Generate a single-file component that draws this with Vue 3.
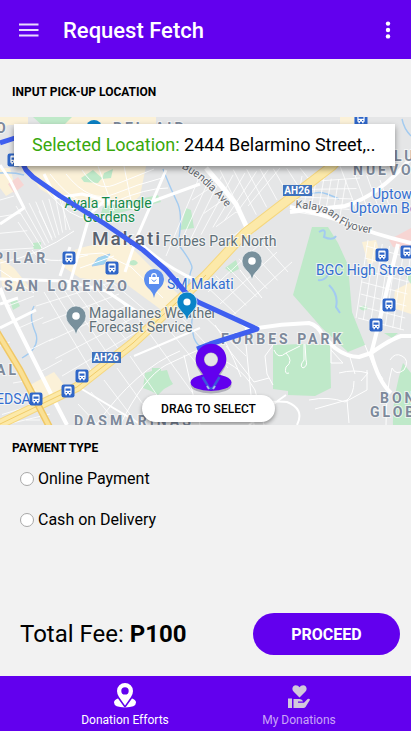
<script setup>
import { ref } from 'vue'

const payment = ref('')

// Evenly spaced side streets running between the segments a-b and c-d.
const ladder = (a, b, c, d, n) =>
  Array.from({ length: n }, (_, i) => {
    const t = n > 1 ? i / (n - 1) : 0
    const mix = (p, q) => (p + (q - p) * t).toFixed(1)
    return `M${mix(a[0], b[0])} ${mix(a[1], b[1])}L${mix(c[0], d[0])} ${mix(c[1], d[1])}`
  }).join('')

const sideStreets = [
  ladder([16, 206], [62, 196], [42, 248], [66, 230], 8),
  ladder([18, 222], [60, 200], [34, 246], [70, 230], 3),
  ladder([0, 200], [0, 250], [14, 196], [34, 248], 4),
  ladder([44, 292], [112, 282], [92, 372], [152, 316], 8),
  ladder([36, 306], [62, 376], [112, 282], [140, 330], 5),
  ladder([8, 306], [40, 372], [34, 296], [62, 360], 4),
  ladder([198, 180], [280, 168], [166, 256], [248, 206], 8),
  ladder([192, 200], [228, 240], [216, 184], [246, 226], 4),
  ladder([220, 170], [300, 168], [246, 222], [308, 178], 7),
  ladder([302, 176], [346, 180], [296, 208], [340, 216], 7),
  ladder([304, 182], [296, 212], [360, 178], [346, 220], 5),
  ladder([368, 240], [411, 252], [356, 318], [400, 330], 7),
  ladder([366, 246], [358, 318], [411, 258], [404, 330], 7),
  ladder([204, 284], [262, 242], [236, 314], [288, 272], 6),
  ladder([208, 292], [232, 316], [262, 242], [292, 262], 3),
  ladder([78, 404], [130, 356], [98, 425], [170, 414], 5),
  ladder([150, 334], [196, 308], [192, 392], [246, 356], 4),
  ladder([340, 166], [380, 180], [358, 214], [390, 208], 4),
  ladder([0, 346], [26, 420], [10, 342], [40, 420], 3),
  ladder([0, 404], [4, 425], [36, 390], [50, 414], 3),
].join('')

const stops = [
  [14, 160], [69, 258], [112, 268], [361, 119], [382, 255], [407, 252],
  [389, 305], [376, 325], [82, 376], [68, 391], [36, 399],
]

const areas = [
  { x: -4, y: 133, t: 'O' },
  { x: 113, y: 133, t: 'BEL-AIR' },
  { x: 394, y: 161, t: 'LU' },
  { x: 353, y: 175, t: 'NUEVO' },
  { x: -6, y: 263, t: 'PILAR' },
  { x: 4, y: 291, t: 'SAN LORENZO' },
  { x: -4, y: 375, t: 'AL' },
  { x: 74, y: 426, t: 'DASMARINAS' },
  { x: 221, y: 344, t: 'FORBES PARK' },
  { x: 380, y: 403, t: 'BONI' },
  { x: 370, y: 417, t: 'GLOBAL' },
]
</script>

<template>
  <div class="page">
    <header class="bar">
      <button class="icon-btn" type="button" aria-label="Menu">
        <svg width="20" height="14" viewBox="0 0 20 14"><path d="M0 1.4h19.500M0 7h19.500M0 12.6h19.500" stroke="#e9dcfd" stroke-width="2" /></svg>
      </button>
      <h1>Request Fetch</h1>
      <button class="icon-btn" type="button" aria-label="More options">
        <svg width="6" height="20" viewBox="0 0 6 20" fill="#fff"><circle cx="3" cy="3.6" r="2.2" /><circle cx="3" cy="10" r="2.2" /><circle cx="3" cy="16.4" r="2.2" /></svg>
      </button>
    </header>

    <main>
      <h2>INPUT PICK-UP LOCATION</h2>
      <section class="map" aria-label="Map">
        <svg class="tiles" viewBox="0 117 411 308" preserveAspectRatio="xMidYMid slice">
          <defs>
            <g id="stop">
              <rect x="-6.5" y="-6.5" width="13" height="13" rx="2.2" fill="#2f66c8" />
              <path d="M-3.6 -3.2q0-1.2 1.2-1.2h4.8q1.2 0 1.2 1.2v6h-1v1.4h-1.5v-1.4h-2.2v1.4h-1.5v-1.4h-1z" fill="#fff" />
              <path d="M-2.5 -2.6h5v2.4h-5zM-2.3 1h1.3v1h-1.3zM1 1h1.3v1h-1.3z" fill="#2f66c8" />
            </g>
            <path id="buendia" d="M181 168Q197 177 205 185Q216 195 232 214" />
            <path id="kalayaan" d="M295 208Q320 209 331 216Q342 230 376 234" />
          </defs>
          <rect y="117" width="411" height="308" fill="#e5e6e7" />

          <g fill="#fbf1d8">
            <path d="M0 117h28v8H8L0 130zM46 117h110v8H46zM24 166h122l-6 30-16 14-26-6-34-1-24-14zM0 168h10l6 22-10 6-6-8z" />
            <path d="M64 254l16-6 42-10 20 20 42 42-18 14-10-8-30-22-46-6-18-12z" />
            <path d="M0 258l14 10 16 20-14 4-14-6zM30 385l24-13 14 18-24 12zM362 242l14-2 6 20-14 4zM395 290l16-8v32l-18-6zM340 117h14v7h-14z" />
          </g>
          <path d="M8 184l10-7 6 8-10 8zM389 240l22-12v22l-18-3z" fill="#f7d5d3" />
          <g fill="#bfe9c9">
            <path d="M312 227h16l10 16 10 22 4 47 13 33-17 7-26-24-29-33 9-32z" />
            <path d="M273 345l30-1 27 1 1 43-16 8-27-1v-4l-15-2z" />
            <path d="M145 373l7-2v-3h9v3l6-1 3 9 3 5-9 5-6 6-7-4-8-3z" />
            <path d="M33 117h39l-8 8H42zM81 178l12-8 9 8-4 5-14-1zM104 173l9-4-2 9-9 1zM103 207l55-12 3 7-46 12-14-1zM180 230l6-22 5 2 3 18zM225 268l11-8 3 9-8 4zM10 301l6-3 4 8-7 4zM33 243l8-1v7h-8zM128 263q6-6 10 0-4 5-10 0zM359 308q5-5 9 0-4 5-9 0zM384 333h14l-6 5zM393 425q-1-28 10-62l8 10v52zM406 276l5-2v10z" />
          </g>
          <g fill="none" stroke="#a3cbf0">
            <path d="M163 169q6 16 15 35 5 13 0 40 14 18 14 24-4 10-3 22M0 173q14-1 24 2M402 119q2 10 9 17M311 194q8-3 16 0t12 5M22 358q18-10 14-24-8-18-2-28M198 300q-10 18-4 38 4 10 10 8" stroke-width="1.4" />
            <path d="M319 232q8-5 5 5 9 4 12-1M318 280q6 1 10-5M329 285q10 10 7 22l4 6" stroke-width="2" />
            <path d="M92 266l6-8 12-4-6 10z" fill="#9dd5f0" />
          </g>

          <path :d="sideStreets" class="lane side" />
          <g class="lane">
            <path d="M50 174q32 42 64 28t54-14M66 174q24 30 48 20t48-16M82 170q14 22 32 15t40-16M42 184q35 51 81 30M98 166l16 45M124 166l8 40M0 263q40-8 74-32M32 250q10 18 56 5M77 255l25-2 29 14 32 31M80 268l34-12M0 270l34 23" />
            <path d="M274 350q4 10 12 3l14-7M286 353q8 8 0 14-2 8 3 6M304 344v16q-5 6-1 8 5-2 3-8l-1-16M331 345v18h12l-12-13M309 400q20-4 36 2l22-12v-20M339 373q15-4 29 0l-7 8M315 409l32-9 2 23M354 381q0 14-8 20M273 345l-8 11 2 18 6 11M215 325q12 16 26 52M226 346l28 36 15-4M240 270l22 28M235 316q8 14 20 14M246 345l8 80M206 355q32 6 49 35l9 35M349 354l6 20M365 345l8 20 10 14" />
            <path d="M120 425q24-48 46-60l32-15M96 425q40-56 84-74M184 355l16 70M390 360q5-8 12-4 8 4 2 14-8 6-12-2-6 22-6 57" />
          </g>
          <g class="road">
            <path d="M0 288q4 12 10 24l43 86 14 27" stroke-width="4" />
            <path d="M0 328l36-18M68 290l22-76 14-13M44 174l12 24 26-4 52 14 66-24M125 272l12-35 29-67M136 239q28 28 62 42M0 224l24-16-14-28-10-15M60 276l10-29M0 279l66 2 40 10 30 20M0 304l18-6" stroke-width="3" />
            <path d="M206 168q16 18 30 36l12 26" stroke-width="5" />
            <path d="M245 330q32-6 64-7 9 2 14 13l12 12q12 9 24 9l12-4q20-14 30-17h10M371 354l7-27 14-58 6-25M371 353q7 28 20 40M290 212l55-6q34-10 66-48M290 207q28 6 57 16 26 11 64 20" stroke-width="4" />
            <path d="M286 395q-15 10-27 22l-10 8M250 407q20-7 37-5 18 7 10 23M80 388l62 37M134 356l66-28" stroke-width="2" />
          </g>
          <g fill="none" stroke-linejoin="round">
            <path d="M0 424l50-24 27-13 56-44 73-68 39-42 87-67 24-26" stroke="#f5d77f" stroke-width="10" />
            <path d="M0 424l50-24 27-13 56-44 73-68 39-42 87-67 24-26" stroke="#fce9a9" stroke-width="8" />
            <path d="M-3 332l23 38 30 58" stroke="#f0c866" stroke-width="7" />
            <path d="M-3 332l23 38 30 58" stroke="#fae094" stroke-width="4" />
            <path d="M0 424l50-24 27-13 56-44 73-68" stroke="#f1cc68" stroke-width="1" />
          </g>

          <g class="area">
            <text v-for="a in areas" :key="a.t" :x="a.x" :y="a.y">{{ a.t }}</text>
          </g>
          <text class="city" x="92" y="245">Makati</text>
          <g class="place">
            <text x="163" y="246">Forbes Park North</text>
            <text x="89" y="318">Magallanes Weather</text>
            <text x="89" y="332">Forecast Service</text>
          </g>
          <g class="place park" text-anchor="middle">
            <text x="108" y="208">Ayala Triangle</text>
            <text x="109" y="222">Gardens</text>
          </g>
          <g class="place shop">
            <text x="167" y="289">SM Makati</text>
            <text x="372" y="199">Uptown</text>
            <text x="350" y="213">Uptown Bonifacio</text>
            <text x="316" y="275">BGC High Street</text>
            <text x="-4" y="404">EDSA</text>
          </g>
          <g class="street">
            <text><textPath href="#buendia">Buendia Ave</textPath></text>
            <text><textPath href="#kalayaan">Kalayaan Flyover</textPath></text>
          </g>
          <g class="shield">
            <rect x="283" y="185" width="29" height="11" /><text x="297" y="194">AH26</text>
            <rect x="92" y="352" width="29" height="11" /><text x="106" y="361">AH26</text>
          </g>
          <use v-for="(s, i) in stops" :key="i" href="#stop" :transform="`translate(${s[0]} ${s[1]})`" />

          <circle cx="94" cy="128" r="8" fill="#0b80c4" />
          <g fill="#78909c" stroke="#f4f6f8" stroke-width=".6">
            <path d="M76 335q-1-6-6-10-4-4-4-9a10 10 0 0 1 20 0q0 5-4 9-5 4-6 10z" />
            <path d="M252 280q-1-6-6-10-4-4-4-9a10 10 0 0 1 20 0q0 5-4 9-5 4-6 10z" />
          </g>
          <circle cx="76" cy="316" r="3.8" fill="#fff" /><circle cx="252" cy="261" r="3.8" fill="#fff" />
          <path d="M154 298q-1-6-6-10-4-4-4-9a10 10 0 0 1 20 0q0 5-4 9-5 4-6 10z" fill="#5b8def" />
          <path d="M149 277h10v7h-10z" fill="#fff" /><path d="M151.700 277v-1a2.300 2.300 0 0 1 4.600 0v1" fill="none" stroke="#fff" stroke-width="1.200" /><path d="M151.800 279.500q2.200 3.600 4.400 0" fill="none" stroke="#5b8def" />

          <path d="M0 143L15 138M22 162L26 170L33 177L60 196L105 224L143 250L166 270L187 294L198 302L257 329L210 344L197 349" fill="none" stroke="#3f5ff0" stroke-width="5" stroke-linejoin="round" />
          <path d="M187 321q-1-6-6-10-4-4-4-9a10 10 0 0 1 20 0q0 5-4 9-5 4-6 10z" fill="#0b84c8" stroke="#fff" stroke-width=".6" />
          <circle cx="187" cy="302" r="3.600" fill="#fff" />
        </svg>

        <p class="selected"><span>Selected Location:</span> 2444 Belarmino Street,..</p>

        <div class="picker">
          <svg class="pin" width="44" height="52" viewBox="0 0 44 52">
            <g fill="#8d8d9c" opacity=".6" transform="translate(0 2)">
              <ellipse cx="22" cy="40" rx="20.500" ry="8.500" />
              <path d="M22 45L9.500 25A15.300 15.300 0 1 1 34.500 25z" />
            </g>
            <ellipse cx="22" cy="39.500" rx="20.500" ry="8.500" fill="#6200ee" />
            <path d="M13.500 34l6 10q2.500 3 5 0l6-10" fill="none" stroke="#3d55dc" stroke-width="2.500" />
            <path d="M18 43l2 3M26 43l-2 3" stroke="#a8bde8" stroke-width="2" />
            <path fill-rule="evenodd" d="M22 43Q20 40 10 25.500A15.300 15.300 0 1 1 34 25.500Q24 40 22 43zM22 9.500a7 7 0 1 0 0 14a7 7 0 1 0 0-14z" fill="#6200ee" />
            <circle cx="22" cy="16.500" r="6.500" fill="#e4e4e6" />
          </svg>
          <button class="drag" type="button">DRAG TO SELECT</button>
        </div>
      </section>

      <fieldset>
        <legend>PAYMENT TYPE</legend>
        <label><input v-model="payment" type="radio" name="payment" value="online" />Online Payment</label>
        <label><input v-model="payment" type="radio" name="payment" value="cash" />Cash on Delivery</label>
      </fieldset>

      <div class="checkout">
        <p>Total Fee: <b>P100</b></p>
        <button class="proceed" type="button">PROCEED</button>
      </div>
    </main>

    <nav>
      <a href="#efforts" class="current">
        <svg width="22" height="25" viewBox="0 0 22 25" fill="#fff">
          <path fill-rule="evenodd" d="M11 0a8 8 0 0 1 8 8q0 3-2 6l-6 8.500L5 14Q3 11 3 8a8 8 0 0 1 8-8zM11 4.200a3.700 3.700 0 1 0 0 7.400a3.700 3.700 0 1 0 0-7.400z" />
          <path d="M4 15.500l6 8.200q1 1 2 0l6-8.200q4 1.500 4 4 0 4.800-11 5Q0 24.300 0 19.500 0 17 4 15.500z" />
        </svg>
        Donation Efforts
      </a>
      <a href="#donations">
        <svg width="22" height="23" viewBox="0 0 22 23" fill="#d2c8dc">
          <path d="M11.500 12.500L5.500 6.500C2.500 3 6-1.500 10 .8l1.500 1.400L13 .8c4-2.300 7.500 2.200 4.500 5.700z" />
          <path d="M0 13.500h4V23H0zM5.500 14h6q2 0 3 1.500l.5 1h-5v1.200h6l3.600-3.600q1.600-.8 2.400.6L17.500 22q-.8 1-2 1h-10z" />
        </svg>
        My Donations
      </a>
    </nav>
  </div>
</template>

<style>
body {
  background: #f2f2f2;
}
</style>

<style scoped>
.page {
  display: flex;
  flex-direction: column;
  min-height: 100vh;
  font-family: Roboto, "Liberation Sans", sans-serif;
  color: #000;
  background: #f2f2f2;
}
button {
  font-family: inherit;
  border: 0;
  padding: 0;
  cursor: pointer;
}
h1, h2, p {
  margin: 0;
}
.bar {
  display: flex;
  align-items: center;
  height: 59px;
  padding: 0 20px 0 19px;
  background: #6200ee;
}
.bar h1 {
  flex: 1;
  padding: 2px 0 0 24px;
  font-size: 22px;
  font-weight: 500;
  line-height: 28px;
  color: #fff;
}
.icon-btn {
  display: flex;
  background: none;
}
main {
  flex: 1;
  display: flex;
  flex-direction: column;
}
h2, legend {
  padding: 0 12px;
  font-size: 12px;
  font-weight: 700;
  line-height: 16px;
}
h2 {
  margin: 25px 0 17px;
}
.map {
  position: relative;
  height: 308px;
  overflow: hidden;
}
.tiles {
  display: block;
  width: 100%;
  height: 100%;
}
.lane, .road {
  fill: none;
  stroke: #fff;
  stroke-linejoin: round;
}
.lane {
  stroke-width: 1;
}
.side {
  opacity: 0.8;
}
.area {
  font-size: 14px;
  font-weight: 700;
  letter-spacing: 3px;
  fill: #7d899b;
}
.city {
  font-size: 19px;
  font-weight: 500;
  letter-spacing: 2px;
  fill: #59616d;
}
.area, .city, .place, .street {
  paint-order: stroke;
  stroke: rgba(248, 248, 248, 0.8);
  stroke-width: 2px;
}
.place {
  font-size: 14px;
  fill: #607078;
}
.park {
  fill: #148a48;
}
.shop {
  fill: #346fd0;
}
.street {
  font-size: 11px;
  fill: #62666c;
}
.shield rect {
  fill: #3f72bd;
}
.shield text {
  font-size: 10px;
  font-weight: 700;
  text-anchor: middle;
  fill: #fff;
}
.selected {
  position: absolute;
  top: 7px;
  left: 14px;
  right: 16px;
  padding: 0 18px;
  font-size: 18px;
  line-height: 42px;
  white-space: nowrap;
  background: #fff;
  box-shadow: 0 3px 6px rgba(0, 0, 0, 0.4);
}
.selected span {
  color: #38a80c;
}
.picker {
  position: absolute;
  bottom: 3px;
  left: 0;
  right: 0;
  display: flex;
  flex-direction: column;
  align-items: center;
}
.pin {
  display: block;
  margin-left: 10px;
}
.drag {
  width: 133px;
  height: 27px;
  margin-left: 6px;
  border-radius: 14px;
  font-size: 12px;
  font-weight: 500;
  color: #000;
  background: #fff;
  box-shadow: 0 2px 4px rgba(0, 0, 0, 0.4);
}
fieldset {
  display: flex;
  flex-direction: column;
  gap: 17px;
  margin: 15px 0 0;
  padding: 0;
  border: 0;
}
legend {
  margin-bottom: 11px;
}
label {
  display: flex;
  align-items: center;
  gap: 4px;
  padding-left: 20px;
  font-size: 16px;
  line-height: 24px;
}
input {
  appearance: none;
  width: 14px;
  height: 14px;
  margin: 0;
  border: 1px solid #a8a8a8;
  border-radius: 50%;
  background: #fff;
}
input:checked {
  border: 4px solid #6200ee;
}
.checkout {
  display: flex;
  align-items: center;
  justify-content: space-between;
  margin-top: auto;
  padding: 20px 11px 21px 20px;
  font-size: 24px;
}
.proceed {
  width: 147px;
  height: 42px;
  border-radius: 21px;
  font-size: 16px;
  font-weight: 700;
  color: #fff;
  background: #6200ee;
}
nav {
  display: grid;
  grid-template-columns: 1fr 1fr;
  height: 55px;
  padding: 0 25px 0 38px;
  background: #6200ee;
}
nav a {
  display: flex;
  flex-direction: column;
  align-items: center;
  justify-content: flex-end;
  gap: 4px;
  padding-bottom: 3px;
  font-size: 12px;
  line-height: 16px;
  text-decoration: none;
  color: #c9a5f7;
}
nav .current {
  color: #fff;
}
</style>
